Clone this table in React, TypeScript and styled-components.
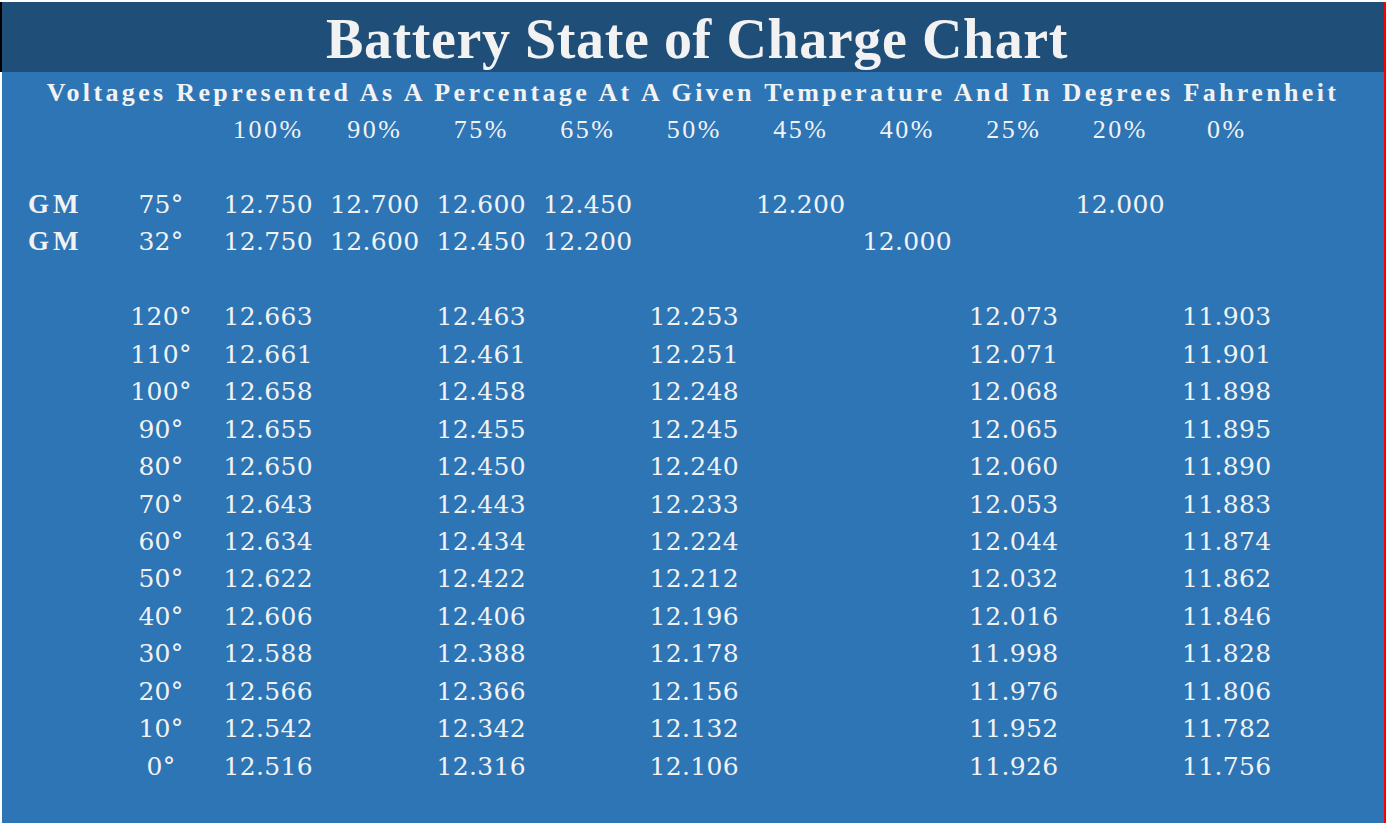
import React from "react";
import styled, { createGlobalStyle } from "styled-components";

const Global = createGlobalStyle`
  html, body { margin: 0; padding: 0; background: #ffffff; }
  body { width: 1387px; height: 823px; overflow: hidden; }
`;

const Frame = styled.div`
  width: 1384px;
  height: 821px;
  margin-top: 2px;
  border-right: 2px solid #ff0000;
  display: flex;
  flex-direction: column;
`;

const Header = styled.header`
  height: 70px;
  background: #1f4e79;
  border-left: 2px solid #000000;
  display: flex;
  align-items: center;
  justify-content: center;
`;

const Title = styled.h1`
  margin: 0;
  font-family: "Liberation Serif", serif;
  font-weight: 700;
  font-size: 56px;
  line-height: 1;
  color: #f2f2f2;
  letter-spacing: 0.6px;
  transform: translate(4px, 2px);
`;

const Body = styled.main`
  flex: 1;
  margin-left: 2px;
  background: #2e75b6;
  padding-top: 1.5px;
  display: flex;
  flex-direction: column;
`;

const Subtitle = styled.div`
  height: 37.44px;
  line-height: 37.44px;
  text-align: center;
  font-family: "Liberation Serif", serif;
  font-weight: 700;
  font-size: 26px;
  letter-spacing: 3.35px;
  color: #f2f2f2;
  white-space: nowrap;
`;

const Table = styled.div`
  display: grid;
  grid-template-columns: 79px 108px repeat(10, 106.5px);
  grid-auto-rows: 37.44px;
  padding-left: 26px;
  color: #f2f2f2;
`;

const Cell = styled.div<{ $kind: "label" | "temp" | "num" | "pct" }>`
  display: flex;
  align-items: center;
  justify-content: ${(p) => (p.$kind === "label" ? "flex-start" : "center")};
  white-space: nowrap;
  font-family: ${(p) =>
    p.$kind === "num" || p.$kind === "temp"
      ? '"DejaVu Serif", serif'
      : '"Liberation Serif", serif'};
  font-weight: ${(p) => (p.$kind === "label" ? 700 : 400)};
  font-size: ${(p) =>
    p.$kind === "label" ? "27px" : p.$kind === "pct" ? "26px" : "25px"};
  letter-spacing: ${(p) =>
    p.$kind === "label" ? "4px" : p.$kind === "pct" ? "2.5px" : "0.3px"};
`;

const percents = ["100%", "90%", "75%", "65%", "50%", "45%", "40%", "25%", "20%", "0%"];

type Row = { label?: string; temp?: string; values?: (string | null)[] };

const rows: Row[] = [
  {},
  {
    label: "GM",
    temp: "75°",
    values: ["12.750", "12.700", "12.600", "12.450", null, "12.200", null, null, "12.000", null],
  },
  {
    label: "GM",
    temp: "32°",
    values: ["12.750", "12.600", "12.450", "12.200", null, null, "12.000", null, null, null],
  },
  {},
];

const tempData: [string, string, string, string, string, string][] = [
  ["120°", "12.663", "12.463", "12.253", "12.073", "11.903"],
  ["110°", "12.661", "12.461", "12.251", "12.071", "11.901"],
  ["100°", "12.658", "12.458", "12.248", "12.068", "11.898"],
  ["90°", "12.655", "12.455", "12.245", "12.065", "11.895"],
  ["80°", "12.650", "12.450", "12.240", "12.060", "11.890"],
  ["70°", "12.643", "12.443", "12.233", "12.053", "11.883"],
  ["60°", "12.634", "12.434", "12.224", "12.044", "11.874"],
  ["50°", "12.622", "12.422", "12.212", "12.032", "11.862"],
  ["40°", "12.606", "12.406", "12.196", "12.016", "11.846"],
  ["30°", "12.588", "12.388", "12.178", "11.998", "11.828"],
  ["20°", "12.566", "12.366", "12.156", "11.976", "11.806"],
  ["10°", "12.542", "12.342", "12.132", "11.952", "11.782"],
  ["0°", "12.516", "12.316", "12.106", "11.926", "11.756"],
];

tempData.forEach(([t, a, b, c, d, e]) => {
  rows.push({ temp: t, values: [a, null, b, null, c, null, null, d, null, e] });
});

export default function App() {
  return (
    <>
      <Global />
      <Frame>
        <Header>
          <Title>Battery State of Charge Chart</Title>
        </Header>
        <Body>
          <Subtitle>
            Voltages Represented As A Percentage At A Given Temperature And In Degrees Fahrenheit
          </Subtitle>
          <Table>
            <Cell $kind="label" />
            <Cell $kind="temp" />
            {percents.map((p) => (
              <Cell key={p} $kind="pct">
                {p}
              </Cell>
            ))}
            {rows.map((r, ri) => (
              <React.Fragment key={ri}>
                <Cell $kind="label">{r.label ?? ""}</Cell>
                <Cell $kind="temp">{r.temp ?? ""}</Cell>
                {Array.from({ length: 10 }).map((_, ci) => (
                  <Cell key={ci} $kind="num">
                    {r.values?.[ci] ?? ""}
                  </Cell>
                ))}
              </React.Fragment>
            ))}
          </Table>
        </Body>
      </Frame>
    </>
  );
}
